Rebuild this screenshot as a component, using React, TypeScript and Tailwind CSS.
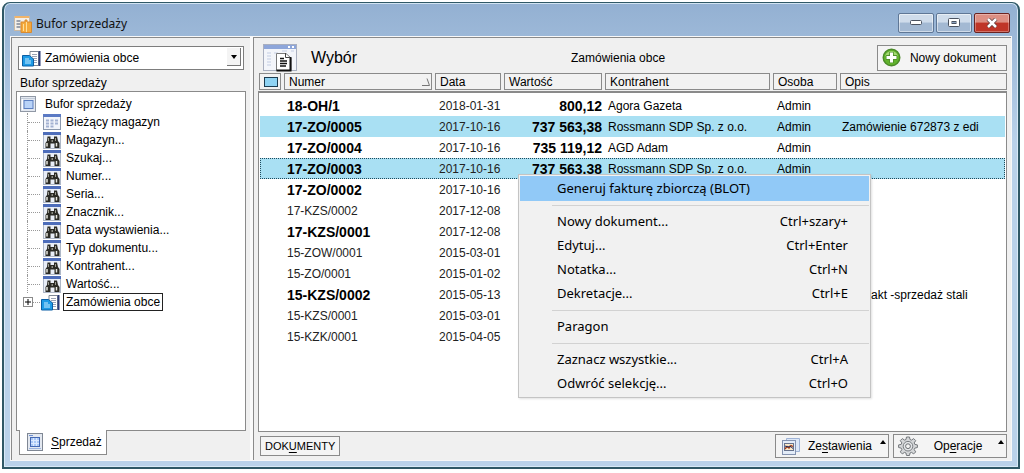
import type { ReactNode } from "react";

function DocumentsIcon() {
  return (
    <svg width="20" height="17" viewBox="0 0 20 17" aria-hidden="true">
      <path d="M9 1.500h8.500v14H9z" fill="#fff" stroke="#7d8794" />
      <path d="M11 4.500h5M11 6.500h5M11 8.500h5M13 10.500h3M13 12.500h3" stroke="#9aa3b5" />
      <path d="M18.500 1v15" stroke="#2c3c78" strokeWidth="2" />
      <path d="M1.500 5.500h7l4 3.500v7h-11z" fill="#1f9be6" stroke="#0b5fa5" />
      <path d="M4 9h4M4 11h6M4 13h6" stroke="#c9ecff" />
    </svg>
  );
}

function SheetIcon() {
  return (
    <svg width="16" height="16" viewBox="0 0 16 16" aria-hidden="true">
      <rect x="0.500" y="0.500" width="15" height="15" fill="#e3e8f0" stroke="#9098a5" />
      <rect x="4" y="4.500" width="9" height="8" fill="#b9d3f8" stroke="#5c7fc0" />
      <path d="M2.500 2v12" stroke="#fff" />
      <path d="M1 2.500h14" stroke="#c2cbd8" />
    </svg>
  );
}

function GridSheetIcon() {
  return (
    <svg width="16" height="18" viewBox="0 0 16 18" aria-hidden="true">
      <rect x="0.500" y="0.500" width="15" height="17" fill="#e3e8f0" stroke="#7f8794" />
      <path d="M2 2.500h4" stroke="#6d8fd0" />
      <rect x="3.500" y="4.500" width="9" height="9" fill="#a9c8f6" stroke="#4569b4" />
      <path d="M6.500 5v8M9.500 5v8M4 7.500h8M4 10.500h8" stroke="#dce9ff" />
      <path d="M2 15.500h12" stroke="#9db4e0" />
    </svg>
  );
}

function CalendarIcon() {
  return (
    <svg width="18" height="16" viewBox="0 0 18 16" aria-hidden="true">
      <rect x="0.500" y="0.500" width="17" height="15" fill="#f2f5fb" stroke="#8b98ad" />
      <path d="M0 1.500h18" stroke="#5b7ac4" strokeWidth="3" />
      <path d="M3 6.500h3M7.500 6.500h3M12 6.500h3M3 9.500h3M7.500 9.500h3M12 9.500h3M3 12.500h3M7.500 12.500h3" stroke="#a3b2d2" strokeWidth="2" />
    </svg>
  );
}

function BinocularsIcon() {
  return (
    <svg width="18" height="17" viewBox="0 0 18 17" aria-hidden="true">
      <rect x="0.500" y="0.500" width="17" height="16" fill="#e9eef7" stroke="#aeb7c6" />
      <path d="M0 1.500h18" stroke="#4d6dba" strokeWidth="3" />
      <path d="M4.500 4.500h3v2.500h3.500v-2.500h3l1 4.500 1.500 2v5h-5v-4.500h-4v4.500h-5v-5l1.500-2z" fill="#2b2b25" />
      <path d="M4 11v3.500M13.500 11v3.500" stroke="#e8e8e0" strokeWidth="1.500" />
      <path d="M5.500 6v3M12.500 6v3" stroke="#9a9a90" />
      <path d="M8.500 8h1.500v2h-1.500z" fill="#8d8d85" />
    </svg>
  );
}

function AppIcon() {
  return (
    <svg width="18" height="18" viewBox="0 0 18 18" aria-hidden="true">
      <rect x="0.500" y="1.500" width="15" height="14" fill="#f4f0ea" stroke="#c9b9a4" />
      <path d="M1 2h14" stroke="#f0b46a" strokeWidth="2" />
      <path d="M2.500 6h4M2.500 9h4M2.500 12h4" stroke="#7e8798" strokeWidth="1.500" />
      <path d="M7 7h4V5h2v2h4.500v10.500H7z" fill="#f4a93c" stroke="#d98a30" />
      <path d="M9.500 9v7M12.500 7v10" stroke="#ffdf9d" />
    </svg>
  );
}

function ChoiceIcon() {
  return (
    <svg width="34" height="28" viewBox="0 0 34 28" aria-hidden="true">
      <rect x="0.500" y="0.500" width="33" height="26" fill="#f3f5fa" stroke="#a9afbf" />
      <path d="M1 3h32" stroke="#8ea6da" strokeWidth="4" />
      <path d="M25 3h2M29 3h2" stroke="#fff" strokeWidth="2" />
      <path d="M4 9h4M4 12h4M4 15h4M4 18h4M4 21h4M11 9h4M19 7h5M28 7h3" stroke="#c3cde3" />
      <path d="M13.500 9.500h9.500l5 4.500v12.500h-14.500z" fill="#fff" stroke="#7a7a7a" />
      <path d="M27.500 13v13.500H13.500" stroke="#111" strokeWidth="2" fill="none" />
      <path d="M22.500 9v4.500h4.500" stroke="#444" fill="none" />
      <path d="M17 14.500h4M17 17h7M17 19.500h7M17 22h6" stroke="#111" strokeWidth="1.300" />
    </svg>
  );
}

function PlusCircleIcon() {
  return (
    <svg width="19" height="19" viewBox="0 0 19 19" aria-hidden="true">
      <circle cx="9.500" cy="9.500" r="8.300" fill="#62b32d" stroke="#4c8a2a" strokeWidth="1.400" />
      <path d="M3 8a6.800 6.800 0 0 1 13 0c-4-2-9-2-13 0z" fill="#a7d977" />
      <path d="M9.500 4v11M4 9.500h11" stroke="#4c8a2a" strokeWidth="4.400" />
      <path d="M9.500 4.500v10M4.500 9.500h10" stroke="#fff" strokeWidth="3" />
    </svg>
  );
}

function ReportIcon() {
  return (
    <svg width="18" height="17" viewBox="0 0 18 17" aria-hidden="true">
      <path d="M4.500 0.500h13v13h-13z" fill="#dce7f7" stroke="#9fb3d6" />
      <rect x="0.500" y="2.500" width="13" height="14" fill="#e3ecf8" stroke="#8593b0" />
      <rect x="2.500" y="5.500" width="9" height="7" fill="#fbe9c9" stroke="#66728c" />
      <path d="M3 11l2-2.500 2 1.500 2-2.500 2 1" stroke="#a33b17" fill="none" strokeWidth="1.300" />
      <path d="M3 8l3 1 2-1 3 2.500" stroke="#1d2c60" fill="none" />
    </svg>
  );
}

function GearIcon() {
  return (
    <svg width="20" height="20" viewBox="0 0 20 20" aria-hidden="true">
      <path
        d="M8.500 1h3l.5 2.500 1.500.6 2.200-1.500 2 2-1.500 2.300.6 1.500 2.600.5v2.600l-2.600.6-.6 1.500 1.500 2.300-2 2-2.200-1.500-1.500.6-.5 2.500h-3l-.5-2.500-1.500-.6-2.200 1.500-2-2 1.500-2.300-.6-1.500L.6 11.500V8.900l2.600-.5.6-1.500-1.500-2.300 2-2L6.500 4.100 8 3.500z"
        fill="#d4d6d8"
        stroke="#74787c"
      />
      <circle cx="10" cy="10.200" r="4.800" fill="#e4e6e8" stroke="#7b7f83" />
      <circle cx="10" cy="10.200" r="2.400" fill="#f4f4f4" stroke="#6c7074" />
    </svg>
  );
}

function Triangle({ up = false }: { up?: boolean }) {
  return (
    <svg width="6" height="4" viewBox="0 0 6 4" aria-hidden="true">
      <path d={up ? "M3 0l3 4H0z" : "M0 0h6L3 4z"} fill="#000" />
    </svg>
  );
}

const filters = [
  "Bieżący magazyn",
  "Magazyn...",
  "Szukaj...",
  "Numer...",
  "Seria...",
  "Znacznik...",
  "Data wystawienia...",
  "Typ dokumentu...",
  "Kontrahent...",
  "Wartość...",
];

type Doc = {
  no: string;
  date: string;
  bold?: boolean;
  state?: "selected" | "focused";
  value?: string;
  client?: string;
  person?: string;
  note?: string;
  indentNote?: boolean;
};

const docs: Doc[] = [
  { no: "18-OH/1", date: "2018-01-31", bold: true, value: "800,12", client: "Agora Gazeta", person: "Admin" },
  { no: "17-ZO/0005", date: "2017-10-16", bold: true, state: "selected", value: "737 563,38", client: "Rossmann SDP Sp. z o.o.", person: "Admin", note: "Zamówienie 672873 z edi" },
  { no: "17-ZO/0004", date: "2017-10-16", bold: true, value: "735 119,12", client: "AGD Adam", person: "Admin" },
  { no: "17-ZO/0003", date: "2017-10-16", bold: true, state: "focused", value: "737 563,38", client: "Rossmann SDP Sp. z o.o.", person: "Admin" },
  { no: "17-ZO/0002", date: "2017-10-16", bold: true },
  { no: "17-KZS/0002", date: "2017-12-08" },
  { no: "17-KZS/0001", date: "2017-12-08", bold: true },
  { no: "15-ZOW/0001", date: "2015-03-01" },
  { no: "15-ZO/0001", date: "2015-01-02" },
  { no: "15-KZS/0002", date: "2015-05-13", bold: true, note: "akt -sprzedaż stali", indentNote: true },
  { no: "15-KZS/0001", date: "2015-03-01" },
  { no: "15-KZK/0001", date: "2015-04-05" },
];

const menuGroups: [string, string][][] = [
  [
    ["Nowy dokument...", "Ctrl+szary+"],
    ["Edytuj...", "Ctrl+Enter"],
    ["Notatka...", "Ctrl+N"],
    ["Dekretacje...", "Ctrl+E"],
  ],
  [["Paragon", ""]],
  [
    ["Zaznacz wszystkie...", "Ctrl+A"],
    ["Odwróć selekcję...", "Ctrl+O"],
  ],
];

const rowGrid = "grid grid-cols-[25px_151px_69px_101px_168px_67px_1fr]";

function HeaderCell({ children }: { children: ReactNode }) {
  return (
    <th scope="col" className="mr-[3px] flex h-[17px] items-center justify-between overflow-hidden border border-[#8a8a8a] bg-[#f2f2f2] pl-1 font-normal last:mr-0">
      {children}
    </th>
  );
}

function DocumentTable() {
  return (
    <table className="flex min-h-0 flex-1 flex-col">
      <thead className="block pl-px">
        <tr className={`${rowGrid} h-[18px]`}>
          <HeaderCell>
            <span className="block h-[10px] w-[14px] border border-[#1c3c50] bg-[#8fd3f3]" aria-label="Zaznaczenie" />
          </HeaderCell>
          <HeaderCell>
            Numer
            <svg width="9" height="8" viewBox="0 0 9 8" aria-hidden="true">
              <path d="M0 7.500h7.500L5 0.500" fill="none" stroke="#777" />
            </svg>
          </HeaderCell>
          <HeaderCell>Data</HeaderCell>
          <HeaderCell>Wartość</HeaderCell>
          <HeaderCell>Kontrahent</HeaderCell>
          <HeaderCell>Osoba</HeaderCell>
          <HeaderCell>Opis</HeaderCell>
        </tr>
      </thead>
      <tbody className="block flex-1 border border-t-2 border-[#8a8a8a] bg-white px-px pt-0.5">
        {docs.map((d) => (
          <tr
            key={d.no}
            className={`${rowGrid} h-[21px] items-center whitespace-nowrap ${
              d.state ? "bg-[#a9e0f3]" : ""
            } ${d.state === "focused" ? "outline-1 -outline-offset-1 outline-dotted outline-[#1d4a5c]" : ""}`}
          >
            <td />
            <td className={`pl-0.5 ${d.bold ? "text-sm font-bold leading-5" : "text-[#222]"}`}>{d.no}</td>
            <td className="pl-[3px] text-[#222]">{d.date}</td>
            <td className="pr-1 text-right text-sm font-bold leading-5">{d.value}</td>
            <td className="pl-0.5">{d.client}</td>
            <td className="pl-[3px]">{d.person}</td>
            <td className={d.indentNote ? "pl-[30px]" : "pl-px"}>{d.note}</td>
          </tr>
        ))}
      </tbody>
    </table>
  );
}

function Tree() {
  return (
    <ul className="mx-1 flex-1 border border-[#8a8a8a] bg-white pt-[3px]">
      <li className="pl-[3px]">
        <div className="flex h-[18px] items-center gap-[9px]">
          <SheetIcon />
          Bufor sprzedaży
        </div>
        <ul className="ml-[7px]">
          {filters.map((f, i) => (
            <li key={f} className="flex h-[18px] items-center border-l border-dotted border-[#999]">
              <span className="mr-[3px] w-3 border-t border-dotted border-[#999]" />
              {i === 0 ? <CalendarIcon /> : <BinocularsIcon />}
              <span className="ml-[5px]">{f}</span>
            </li>
          ))}
          <li className="-ml-1 flex h-[18px] items-center">
            <button aria-label="Rozwiń Zamówienia obce" className="flex h-[10px] w-[10px] items-center justify-center border border-[#8a8a8a] bg-white">
              <svg width="6" height="6" viewBox="0 0 6 6" aria-hidden="true">
                <path d="M3 0v6M0 3h6" stroke="#000" />
              </svg>
            </button>
            <span className="w-[7px] border-t border-dotted border-[#999]" />
            <DocumentsIcon />
            <span className="ml-[3px] border border-[#222] px-0.5 leading-4">Zamówienia obce</span>
          </li>
        </ul>
      </li>
    </ul>
  );
}

function Sidebar() {
  return (
    <aside className="flex w-[239px] flex-col border-l border-t border-[#8a8a8a] bg-[#f0f0f0] pt-2">
      <div className="relative mx-1.5 h-6 border border-[#7d7d7d] bg-white">
        <span className="pointer-events-none absolute left-0.5 top-[3px]">
          <DocumentsIcon />
        </span>
        <select aria-label="Widok" className="h-full w-full appearance-none bg-transparent pl-[26px]">
          <option>Zamówienia obce</option>
        </select>
        <span className="pointer-events-none absolute bottom-[3px] right-0.5 top-px flex w-[14px] items-center justify-center border-b border-r border-[#777] bg-[#f4f4f4]">
          <Triangle />
        </span>
      </div>
      <h2 className="flex h-[21px] items-center pl-2 pt-1">Bufor sprzedaży</h2>
      <Tree />
      <div className="h-[29px] pl-[7px]">
        <button className="-mt-px flex h-[25px] items-center gap-2 border border-t-0 border-[#8a8a8a] bg-white pl-[7px] pr-1">
          <GridSheetIcon />
          <span>
            <u className="underline-offset-2">S</u>przedaż
          </span>
        </button>
      </div>
    </aside>
  );
}

function ContextMenu() {
  return (
    <div role="menu" className="absolute left-[518px] top-[174px] w-[353px] border border-[#c4c4c4] bg-[#f1f1f1] p-px font-['Noto_Sans',sans-serif] text-[13px] shadow-[1px_1px_2px_rgba(0,0,0,0.12)]">
      <button role="menuitem" className="flex h-[25px] w-full items-center bg-[#91c9f7] pl-[37px]">
        Generuj fakturę zbiorczą (BLOT)
      </button>
      {menuGroups.map((group, i) => (
        <div key={i}>
          <div role="separator" className="ml-8 flex h-[9px] items-center">
            <span className="h-px w-full bg-[#d2d2d2]" />
          </div>
          {group.map(([label, keys]) => (
            <button key={label} role="menuitem" className="flex h-6 w-full items-center justify-between pl-[37px] pr-[21px]">
              <span>{label}</span>
              <span>{keys}</span>
            </button>
          ))}
        </div>
      ))}
    </div>
  );
}

const captionButton =
  "flex h-[20px] w-9 items-center justify-center rounded-[2px] border border-[#5f7796] bg-linear-to-b from-[#cfdceb] from-45% to-[#a3b9d3] to-50% shadow-[inset_0_0_0_1px_rgba(255,255,255,0.5)]";

function TitleBar() {
  return (
    <header className="flex h-[33px] items-center justify-between pl-1 pr-0.5">
      <h1 className="flex items-center gap-1 pt-2 font-['Noto_Sans',sans-serif] text-xs text-[#111]">
        <AppIcon />
        Bufor sprzedaży
      </h1>
      <div className="flex gap-0.5 pt-1.5">
        <button aria-label="Minimalizuj" className={captionButton}>
          <svg width="12" height="5" viewBox="0 0 12 5" aria-hidden="true">
            <rect x="0.500" y="0.500" width="11" height="4" rx="1" fill="#fff" stroke="#4b5360" />
          </svg>
        </button>
        <button aria-label="Maksymalizuj" className={captionButton}>
          <svg width="12" height="9" viewBox="0 0 12 9" aria-hidden="true">
            <rect x="0.500" y="0.500" width="11" height="8" rx="1" fill="#fff" stroke="#4b5360" />
            <rect x="4" y="3.500" width="4" height="2" fill="#8ba3c0" stroke="#4b5360" />
          </svg>
        </button>
        <button
          aria-label="Zamknij"
          className="flex h-[20px] w-9 items-center justify-center rounded-[2px] border border-[#6b2320] bg-linear-to-b from-[#dd8f83] from-45% to-[#bf3527] to-50% shadow-[inset_0_0_0_1px_rgba(255,255,255,0.3)]"
        >
          <svg width="12" height="10" viewBox="0 0 12 10" aria-hidden="true">
            <path d="M2 1l8 8M10 1l-8 8" stroke="#5c3a3a" strokeWidth="4" />
            <path d="M2 1l8 8M10 1l-8 8" stroke="#fff" strokeWidth="2.500" />
          </svg>
        </button>
      </div>
    </header>
  );
}

export default function App() {
  return (
    <div className="relative h-screen bg-white pb-1 pl-0.5 pr-1 pt-0.5 font-['Liberation_Sans',Arial,sans-serif] text-xs text-black">
      <div className="flex h-full flex-col rounded-t-lg border-2 border-t border-[#2f5866] bg-linear-to-b from-[#93b0d2] to-[#bad2ea] to-[140px] px-1.5 pb-1.5 shadow-[inset_0_0_0_1px_rgba(225,240,250,0.8)]">
        <TitleBar />
        <div className="flex min-h-0 flex-1 border border-[#f8f8f8] bg-[#fafafa]">
          <Sidebar />
          <main className="ml-[3px] flex min-w-0 flex-1 flex-col border-l border-t border-[#8a8a8a] bg-[#f0f0f0] px-1">
            <div className="flex h-[35px] items-center pl-[5px] pt-1">
              <ChoiceIcon />
              <h2 className="w-[274px] pl-[14px] text-base">Wybór</h2>
              <h3 className="flex-1">Zamówienia obce</h3>
              <button className="flex h-[26px] items-center gap-[9px] border border-[#8a8a8a] bg-[#f4f4f4] pl-1 pr-2.5">
                <PlusCircleIcon />
                Nowy dokument
              </button>
            </div>
            <DocumentTable />
            <footer className="flex h-[28px] justify-between pb-0.5 pl-0.5 pt-0.5">
              <button className="my-0.5 border border-[#8a8a8a] bg-[#f4f4f4] px-1 text-[11px]">
                DOK<u className="underline-offset-2">U</u>MENTY
              </button>
              <div className="flex gap-1">
                <button className="flex w-[114px] items-center border border-[#8a8a8a] bg-[#f4f4f4] pl-1.5 pr-0.5">
                  <ReportIcon />
                  <span className="flex-1">
                    Ze<u className="underline-offset-2">s</u>tawienia
                  </span>
                  <span className="self-start pt-[5px]">
                    <Triangle up />
                  </span>
                </button>
                <button className="flex w-[114px] items-center border border-[#8a8a8a] bg-[#f4f4f4] pl-1 pr-0.5">
                  <GearIcon />
                  <span className="flex-1">
                    Op<u className="underline-offset-2">e</u>racje
                  </span>
                  <span className="self-start pt-[5px]">
                    <Triangle up />
                  </span>
                </button>
              </div>
            </footer>
          </main>
        </div>
      </div>
      <ContextMenu />
    </div>
  );
}
